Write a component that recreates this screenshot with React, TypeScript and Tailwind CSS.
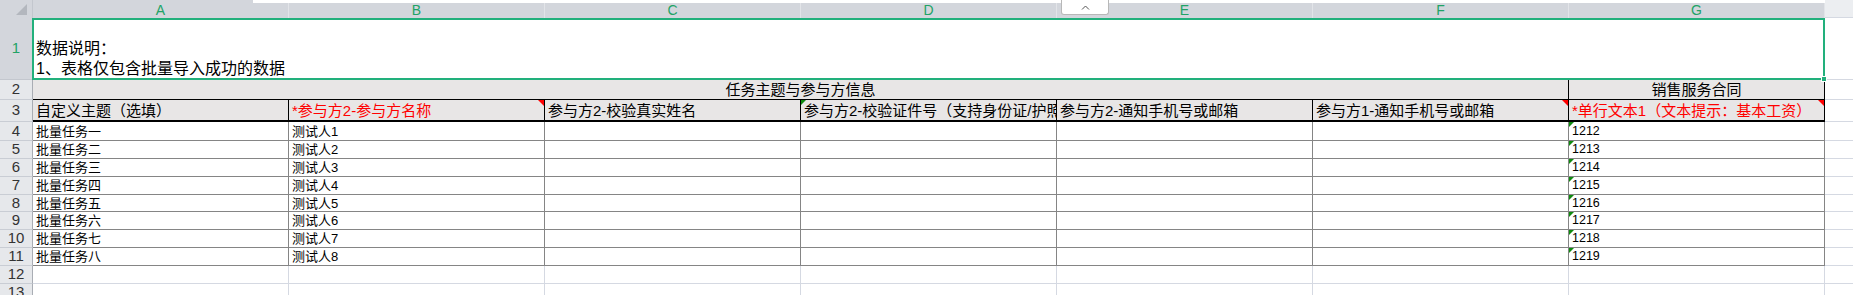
import React from 'react';

const cols = ['A', 'B', 'C', 'D', 'E', 'F', 'G'];

const rows = [
  { a: '批量任务一', b: '测试人1', g: '1212' },
  { a: '批量任务二', b: '测试人2', g: '1213' },
  { a: '批量任务三', b: '测试人3', g: '1214' },
  { a: '批量任务四', b: '测试人4', g: '1215' },
  { a: '批量任务五', b: '测试人5', g: '1216' },
  { a: '批量任务六', b: '测试人6', g: '1217' },
  { a: '批量任务七', b: '测试人7', g: '1218' },
  { a: '批量任务八', b: '测试人8', g: '1219' },
];

function RowHead({ n, active }: { n: number; active?: boolean }) {
  return (
    <div
      className={
        active
          ? 'bg-[#d3d6dc] border-r border-b border-r-[#a9adb4] border-b-[#c3c7ce] flex items-center justify-center text-[15px] text-[#21a366]'
          : 'bg-[#e6e8eb] border-r border-b border-r-[#a9adb4] border-b-[#c9cdd4] flex items-center justify-center text-[15px] text-[#333]'
      }
    >
      {n}
    </div>
  );
}

function RedMark() {
  return <span className="absolute top-0 right-0 w-0 h-0 border-t-[6px] border-t-[#ff0000] border-l-[6px] border-l-transparent" />;
}

function GreenMark() {
  return <span className="absolute top-0 left-0 w-0 h-0 border-t-[5px] border-t-[#0f8a0f] border-r-[5px] border-r-transparent" />;
}

export default function App() {
  return (
    <div className="relative w-[1853px] h-[295px] overflow-hidden bg-white [font-family:'Liberation_Sans','Noto_Sans_CJK_SC',sans-serif] text-black">
      <div className="grid grid-cols-[33px_repeat(7,256px)_1fr] grid-rows-[18px_62px_20px_22px_19px_18px_18px_18px_17px_18px_18px_18px_18px_18px]">
        {/* column header */}
        <div className="bg-[#d3d6dc] border-r border-[#c3c7ce] flex items-end justify-end pr-[5px] pb-[3px]">
          <svg width="11" height="11" viewBox="0 0 11 11">
            <polygon points="11,0 11,11 0,11" fill="#b3b7be" />
          </svg>
        </div>
        {cols.map((c) => (
          <div
            key={c}
            className="bg-[#d3d6dc] border-r border-[#e2e4e8] flex items-center justify-center text-[14px] leading-none text-[#21a366] pt-[2px]"
          >
            {c}
          </div>
        ))}
        <div className="bg-[#eceef1] border-b border-[#d5d9e2]" />

        {/* row 1 */}
        <RowHead n={1} active />
        <div className="col-span-7 bg-white flex flex-col justify-end px-[3px] pb-[1px] text-[16px] leading-[20px]">
          <div>数据说明：</div>
          <div>1、表格仅包含批量导入成功的数据</div>
        </div>
        <div className="bg-white border-b border-[#d5d9e2]" />

        {/* row 2 */}
        <RowHead n={2} />
        <div className="col-span-6 bg-[#e8e6e6] border-r border-b border-black flex items-center justify-center text-[15px] leading-none">
          任务主题与参与方信息
        </div>
        <div className="bg-[#e8e6e6] border-r border-b border-black flex items-center justify-center text-[15px] leading-none">
          销售服务合同
        </div>
        <div className="bg-white border-b border-[#d5d9e2]" />

        {/* row 3 */}
        <RowHead n={3} />
        <div className="relative bg-[#e8e6e6] border-r border-b-2 border-black flex items-center px-[3px] text-[15px] leading-none whitespace-nowrap overflow-hidden">
          自定义主题（选填）
        </div>
        <div className="relative bg-[#e8e6e6] border-r border-b-2 border-black flex items-center px-[3px] text-[15px] leading-none whitespace-nowrap overflow-hidden text-[#ff0000]">
          *参与方2-参与方名称
          <RedMark />
        </div>
        <div className="relative bg-[#e8e6e6] border-r border-b-2 border-black flex items-center px-[3px] text-[15px] leading-none whitespace-nowrap overflow-hidden">
          参与方2-校验真实姓名
        </div>
        <div className="relative bg-[#e8e6e6] border-r border-b-2 border-black flex items-center px-[3px] text-[15px] leading-none whitespace-nowrap overflow-hidden">
          <GreenMark />
          参与方2-校验证件号（支持身份证/护照）
        </div>
        <div className="relative bg-[#e8e6e6] border-r border-b-2 border-black flex items-center px-[3px] text-[15px] leading-none whitespace-nowrap overflow-hidden">
          参与方2-通知手机号或邮箱
        </div>
        <div className="relative bg-[#e8e6e6] border-r border-b-2 border-black flex items-center px-[3px] text-[15px] leading-none whitespace-nowrap overflow-hidden">
          参与方1-通知手机号或邮箱
          <RedMark />
        </div>
        <div className="relative bg-[#e8e6e6] border-r border-b-2 border-black flex items-center px-[3px] text-[15px] leading-none whitespace-nowrap overflow-hidden text-[#ff0000]">
          *单行文本1（文本提示：基本工资）
          <RedMark />
        </div>
        <div className="bg-white border-b border-[#d5d9e2]" />

        {/* data rows */}
        {rows.map((r, i) => (
          <React.Fragment key={i}>
            <RowHead n={i + 4} />
            <div className="bg-white border-r border-b border-[#858585] flex items-center px-[3px] text-[13px] leading-none whitespace-nowrap overflow-hidden">
              {r.a}
            </div>
            <div className="bg-white border-r border-b border-[#858585] flex items-center px-[3px] text-[13px] leading-none whitespace-nowrap overflow-hidden">
              {r.b}
            </div>
            <div className="bg-white border-r border-b border-[#858585]" />
            <div className="bg-white border-r border-b border-[#858585]" />
            <div className="bg-white border-r border-b border-[#858585]" />
            <div className="bg-white border-r border-b border-[#858585]" />
            <div className="relative bg-white border-r border-b border-[#858585] flex items-center px-[3px] text-[12.5px] leading-none whitespace-nowrap overflow-hidden">
              <GreenMark />
              {r.g}
            </div>
            <div className="bg-white border-b border-[#d5d9e2]" />
          </React.Fragment>
        ))}

        {/* empty rows */}
        {[12, 13].map((n) => (
          <React.Fragment key={n}>
            <RowHead n={n} />
            {cols.map((c) => (
              <div key={c} className="bg-white border-r border-b border-[#d5d9e2]" />
            ))}
            <div className="bg-white border-b border-[#d5d9e2]" />
          </React.Fragment>
        ))}
      </div>

      {/* top strip */}
      <div className="absolute left-[253px] top-0 w-[1572px] h-[3px] bg-white" />

      {/* collapse button */}
      <div className="absolute left-[1061px] top-0 w-[48px] h-[15px] bg-white border border-t-0 border-[#b8b8b8] rounded-b-[3px] flex items-center justify-center">
        <svg width="9" height="5" viewBox="0 0 9 5">
          <polyline points="1,4.5 4.5,1 8,4.5" fill="none" stroke="#555" strokeWidth="1" />
        </svg>
      </div>

      {/* selection */}
      <div className="absolute left-[32px] top-[18px] w-[1793px] h-[62px] border-2 border-[#22b07c] pointer-events-none">
        <div className="absolute -right-[4px] -bottom-[4px] w-[6px] h-[6px] bg-[#22b07c] border border-white" />
      </div>
    </div>
  );
}
